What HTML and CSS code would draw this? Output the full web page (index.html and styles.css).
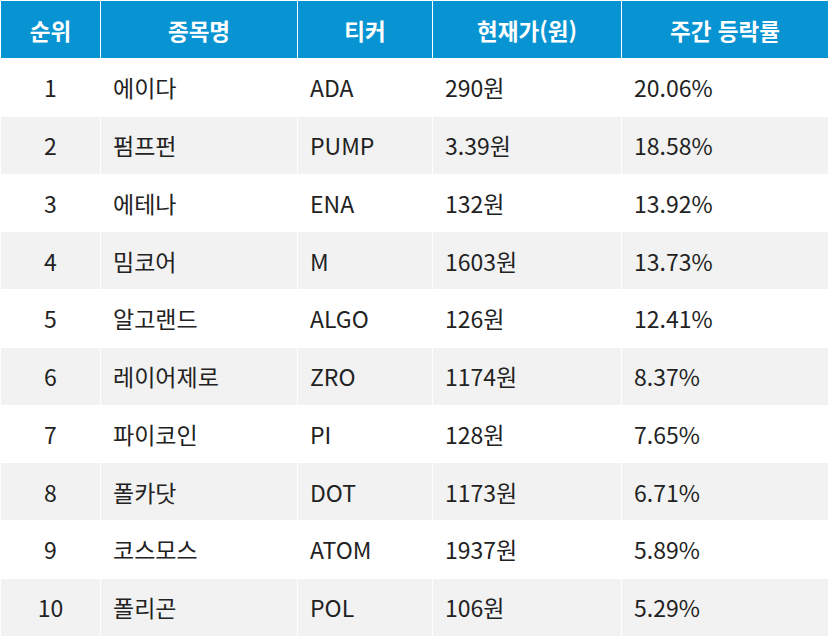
FILE: index.html
```html
<!DOCTYPE html>
<html lang="ko">
<head>
<meta charset="utf-8">
<link rel="stylesheet" href="styles.css">
</head>
<body>
<table class="rank">
  <colgroup>
    <col class="c1"><col class="c2"><col class="c3"><col class="c4"><col class="c5">
  </colgroup>
  <thead>
    <tr><th>순위</th><th>종목명</th><th>티커</th><th>현재가(원)</th><th>주간 등락률</th></tr>
  </thead>
  <tbody>
    <tr><td class="num">1</td><td>에이다</td><td>ADA</td><td>290원</td><td>20.06%</td></tr>
    <tr><td class="num">2</td><td>펌프펀</td><td>PUMP</td><td>3.39원</td><td>18.58%</td></tr>
    <tr><td class="num">3</td><td>에테나</td><td>ENA</td><td>132원</td><td>13.92%</td></tr>
    <tr><td class="num">4</td><td>밈코어</td><td>M</td><td>1603원</td><td>13.73%</td></tr>
    <tr><td class="num">5</td><td>알고랜드</td><td>ALGO</td><td>126원</td><td>12.41%</td></tr>
    <tr><td class="num">6</td><td>레이어제로</td><td>ZRO</td><td>1174원</td><td>8.37%</td></tr>
    <tr><td class="num">7</td><td>파이코인</td><td>PI</td><td>128원</td><td>7.65%</td></tr>
    <tr><td class="num">8</td><td>폴카닷</td><td>DOT</td><td>1173원</td><td>6.71%</td></tr>
    <tr><td class="num">9</td><td>코스모스</td><td>ATOM</td><td>1937원</td><td>5.89%</td></tr>
    <tr><td class="num">10</td><td>폴리곤</td><td>POL</td><td>106원</td><td>5.29%</td></tr>
  </tbody>
</table>
</body>
</html>
```
FILE: styles.css
```css
html, body {
  margin: 0;
  padding: 0;
  background: #ffffff;
}
body {
  font-family: "Noto Sans CJK KR", "Noto Sans", sans-serif;
  color: #222222;
}
.rank {
  width: 828px;
  border-collapse: collapse;
  table-layout: fixed;
}
.c1 { width: 100px; }
.c2 { width: 197px; }
.c3 { width: 135px; }
.c4 { width: 189px; }
.c5 { width: 207px; }
.rank th,
.rank td {
  border: 1px solid #ffffff;
  padding: 0 0 0 12px;
  font-size: 23px;
  line-height: 26px;
  text-align: left;
  vertical-align: middle;
}
.rank th {
  background: #0894d2;
  color: #ffffff;
  font-weight: 700;
  font-size: 22.5px;
  text-align: center;
  padding: 0;
  height: 57px;
}
.rank td {
  height: 56.75px;
  font-weight: 400;
}
.rank td.num {
  text-align: center;
  padding: 0;
}
.rank tbody tr:nth-child(even) td {
  background: #f2f2f2;
}
```
